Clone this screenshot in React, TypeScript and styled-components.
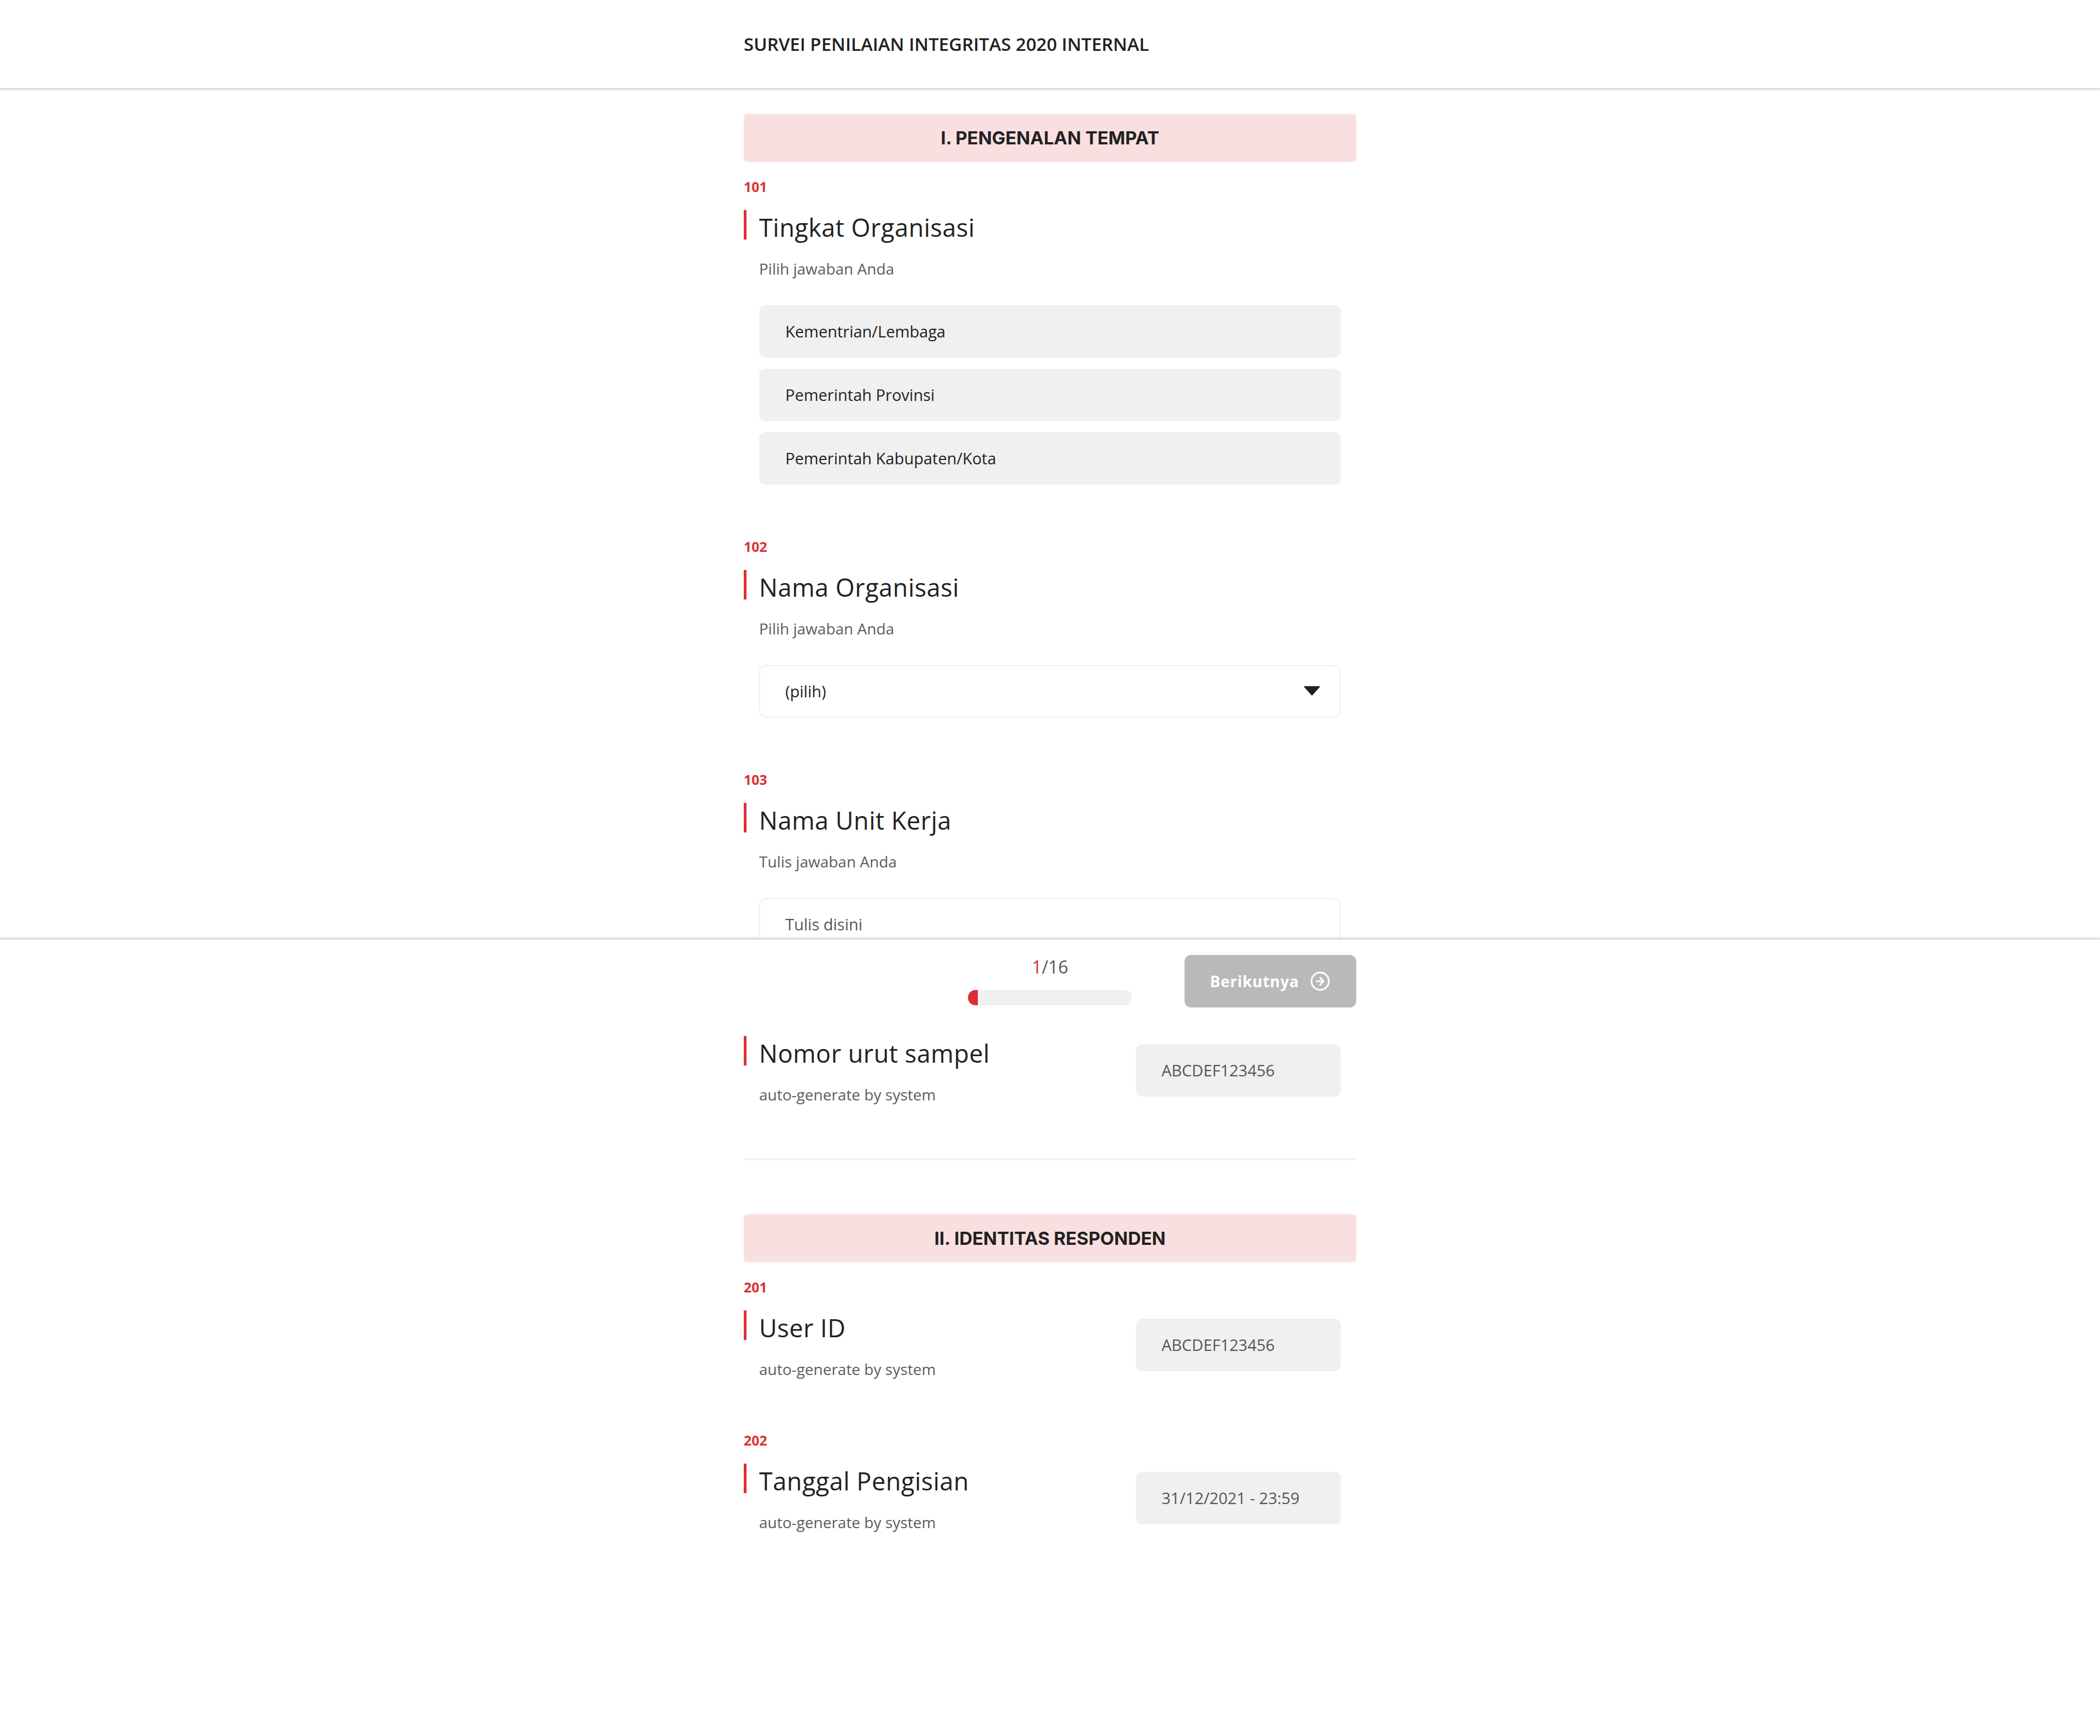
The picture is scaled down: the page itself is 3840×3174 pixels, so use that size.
import styled, { createGlobalStyle } from 'styled-components';
import { CircleArrowRight } from 'lucide-react';

const GlobalStyle = createGlobalStyle`
  html, body {
    margin: 0;
    padding: 0;
    background: #fff;
  }
  * {
    box-sizing: border-box;
  }
`;

const Page = styled.div`
  position: relative;
  min-height: 3174px;
  background: #fff;
  font-family: 'Open Sans', sans-serif;
  color: #212121;
  overflow: hidden;
`;

const Header = styled.header`
  height: 161px;
  box-shadow: 0 2px 0 #dcdcdc, 0 4px 3px rgba(0, 0, 0, 0.12);
  display: flex;
  justify-content: center;
  align-items: center;
`;

const HeaderInner = styled.div`
  width: 1120px;
  font-size: 33px;
  font-weight: 600;
  color: #212121;
`;

const Content = styled.main`
  width: 1120px;
  margin: 0 auto;
  padding-top: 47px;
`;

const SectionHeader = styled.h2`
  height: 88px;
  margin: 0;
  border-radius: 6px;
  background: #fadfe1;
  display: flex;
  align-items: center;
  justify-content: center;
  font-family: Inter, sans-serif;
  font-size: 33px;
  font-weight: 700;
  color: #212121;
`;

const Question = styled.section`
  padding-top: 30px;
  margin-bottom: 68px;
`;

const Code = styled.div`
  height: 30px;
  line-height: 30px;
  margin-bottom: 28px;
  font-size: 25px;
  font-weight: 700;
  color: #dc2f34;
`;

const Title = styled.h3`
  height: 54px;
  margin: 0;
  padding-left: 23px;
  border-left: 5px solid #dc2f34;
  line-height: 64px;
  font-size: 45px;
  font-weight: 400;
  letter-spacing: 0.5px;
  color: #212121;
`;

const Hint = styled.p`
  height: 40px;
  margin: 34px 0 0 28px;
  line-height: 38px;
  font-size: 28px;
  color: #5c5c5c;
`;

const Answers = styled.div`
  margin: 46px 28px 0;
  display: flex;
  flex-direction: column;
  gap: 20px;
`;

const Option = styled.div`
  height: 96px;
  padding: 0 48px 2px;
  display: flex;
  align-items: center;
  border-radius: 12px;
  background: #f0f0f0;
  font-size: 29px;
  color: #212121;
`;

const Select = styled.div`
  height: 96px;
  padding: 0 36px 2px 46px;
  display: flex;
  align-items: center;
  justify-content: space-between;
  border: 2px solid #f0f0f0;
  border-radius: 12px;
  font-size: 29px;
  color: #212121;
`;

const TextInput = styled(Select)`
  color: #555;
`;

const AutoRow = styled.div`
  display: flex;
  justify-content: space-between;
  align-items: flex-start;
  margin-bottom: -4px;
`;

const AutoText = styled.div`
  flex: 1;
`;

const AutoValue = styled.div`
  width: 375px;
  height: 96px;
  margin: 15px 28px 0 0;
  padding: 0 47px 2px;
  display: flex;
  align-items: center;
  border-radius: 12px;
  background: #f0f0f0;
  font-size: 29px;
  color: #555;
`;

const Divider = styled.hr`
  height: 3px;
  margin: 100px 0 99px;
  border: 0;
  background: #f0f0f0;
`;

const Footer = styled.footer`
  position: absolute;
  top: 1718px;
  left: 0;
  right: 0;
  height: 163px;
  box-shadow: 0 -2px 0 #dcdcdc, 0 -4px 3px rgba(0, 0, 0, 0.12);
  background: #fff;
  display: flex;
  justify-content: center;
  padding-top: 28px;
`;

const FooterInner = styled.div`
  width: 1120px;
  display: flex;
  justify-content: flex-end;
  gap: 96px;
`;

const Progress = styled.div`
  width: 300px;
  display: flex;
  flex-direction: column;
  align-items: center;
`;

const Count = styled.div`
  height: 64px;
  line-height: 44px;
  font-size: 32px;
  color: #555;

  b {
    font-weight: 400;
    color: #dc2f34;
  }
`;

const Track = styled.div`
  width: 100%;
  height: 28px;
  border-radius: 14px;
  background: #f0f0f0;
  overflow: hidden;
`;

const Fill = styled.div`
  height: 100%;
  background: #dc2f34;
`;

const NextButton = styled.button`
  width: 314px;
  height: 96px;
  border: 0;
  border-radius: 12px;
  background: #b9b9b9;
  color: #fff;
  display: flex;
  align-items: center;
  justify-content: center;
  gap: 20px;
  font-family: 'Open Sans', sans-serif;
  font-size: 28px;
  font-weight: 700;
  letter-spacing: 0.7px;
  padding: 0;
`;

const Caret = () => (
  <svg width="30" height="18" viewBox="0 0 30 18">
    <path d="M1.5 1.5h27L15 16.5z" fill="#212121" stroke="#212121" strokeWidth="2" strokeLinejoin="round" />
  </svg>
);

const App = () => {
  const step = 1;
  const total = 16;
  const fill = Math.round((step / total) * 100);
  return (
    <Page>
      <GlobalStyle />
      <Header>
        <HeaderInner>SURVEI PENILAIAN INTEGRITAS 2020 INTERNAL</HeaderInner>
      </Header>
      <Content>
        <SectionHeader>I. PENGENALAN TEMPAT</SectionHeader>
        <Question>
          <Code>101</Code>
          <Title>Tingkat Organisasi</Title>
          <Hint>Pilih jawaban Anda</Hint>
          <Answers>
            <Option>Kementrian/Lembaga</Option>
            <Option>Pemerintah Provinsi</Option>
            <Option>Pemerintah Kabupaten/Kota</Option>
          </Answers>
        </Question>
        <Question>
          <Code>102</Code>
          <Title>Nama Organisasi</Title>
          <Hint>Pilih jawaban Anda</Hint>
          <Answers>
            <Select>
              (pilih)
              <Caret />
            </Select>
          </Answers>
        </Question>
        <Question>
          <Code>103</Code>
          <Title>Nama Unit Kerja</Title>
          <Hint>Tulis jawaban Anda</Hint>
          <Answers>
            <TextInput>Tulis disini</TextInput>
          </Answers>
        </Question>
        <Question>
          <Code>104</Code>
          <AutoRow>
            <AutoText>
              <Title>Nomor urut sampel</Title>
              <Hint>auto-generate by system</Hint>
            </AutoText>
            <AutoValue>ABCDEF123456</AutoValue>
          </AutoRow>
        </Question>
        <Divider />
        <SectionHeader>II. IDENTITAS RESPONDEN</SectionHeader>
        <Question>
          <Code>201</Code>
          <AutoRow>
            <AutoText>
              <Title>User ID</Title>
              <Hint>auto-generate by system</Hint>
            </AutoText>
            <AutoValue>ABCDEF123456</AutoValue>
          </AutoRow>
        </Question>
        <Question>
          <Code>202</Code>
          <AutoRow>
            <AutoText>
              <Title>Tanggal Pengisian</Title>
              <Hint>auto-generate by system</Hint>
            </AutoText>
            <AutoValue>31/12/2021 - 23:59</AutoValue>
          </AutoRow>
        </Question>
      </Content>
      <Footer>
        <FooterInner>
          <Progress>
            <Count>
              <b>{step}</b>/{total}
            </Count>
            <Track>
              <Fill style={{ width: `${fill}%` }} />
            </Track>
          </Progress>
          <NextButton>
            Berikutnya
            <CircleArrowRight size={38} strokeWidth={2} />
          </NextButton>
        </FooterInner>
      </Footer>
    </Page>
  );
};

export default App;
